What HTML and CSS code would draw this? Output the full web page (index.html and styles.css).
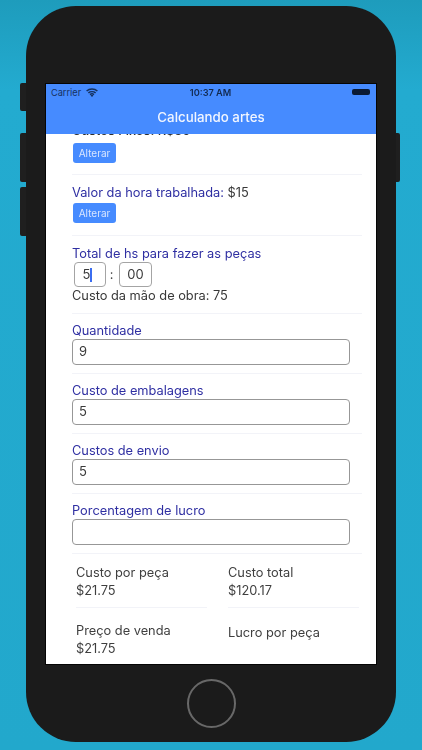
FILE: index.html
```html
<!DOCTYPE html>
<html lang="pt">
<head>
<meta charset="utf-8">
<title>Calculando artes</title>
<link rel="stylesheet" href="styles.css">
</head>
<body>
<div class="phone">
  <span class="side side-mute"></span>
  <span class="side side-up"></span>
  <span class="side side-down"></span>
  <span class="side side-power"></span>
  <main class="screen">
    <header class="appbar">
      <div class="status">
        <div class="status-left">
          <span>Carrier</span>
          <svg class="wifi" viewBox="0 0 12 9" width="12" height="9" fill="none" stroke="#15315f" stroke-width="1.5"><path d="M0.6 3 C3.6 0.2 8.4 0.2 11.4 3"/><path d="M2.4 4.9 C4.4 3.2 7.6 3.2 9.6 4.9"/><path d="M4 6.6 C5.2 5.7 6.8 5.7 8 6.6"/><path d="M6 9 L4.6 7.4 C5.4 6.9 6.6 6.9 7.4 7.4 Z" fill="#15315f" stroke="none"/></svg>
        </div>
        <span class="status-time">10:37 AM</span>
        <div class="status-right"><span class="battery"></span></div>
      </div>
      <h1 class="title">Calculando artes</h1>
    </header>
    <div class="viewport">
      <div class="content">
        <section class="row row-first">
          <p class="label-line dark">Custos Fixos: R$30</p>
          <button class="btn">Alterar</button>
        </section>
        <section class="row row-btn">
          <p class="label-line"><span class="label">Valor da hora trabalhada:</span> <span class="value">$15</span></p>
          <button class="btn">Alterar</button>
        </section>
        <section class="row row-time">
          <p class="label">Total de hs para fazer as peças</p>
          <div class="time">
            <div class="box"><span>5</span><i class="caret"></i></div>
            <span class="colon">:</span>
            <div class="box box-center"><span>00</span></div>
          </div>
          <p class="value">Custo da mão de obra: 75</p>
        </section>
        <section class="row row-field">
          <p class="label">Quantidade</p>
          <div class="field">9</div>
        </section>
        <section class="row row-field">
          <p class="label">Custo de embalagens</p>
          <div class="field">5</div>
        </section>
        <section class="row row-field">
          <p class="label">Custos de envio</p>
          <div class="field">5</div>
        </section>
        <section class="row row-field">
          <p class="label">Porcentagem de lucro</p>
          <div class="field"></div>
        </section>
        <section class="results">
          <div class="cell"><p>Custo por peça</p><p>$21.75</p></div>
          <div class="cell"><p>Custo total</p><p>$120.17</p></div>
          <div class="cell"><p>Preço de venda</p><p>$21.75</p></div>
          <div class="cell cell-single"><p>Lucro por peça</p></div>
        </section>
      </div>
    </div>
  </main>
  <div class="home-area"><span class="home"></span></div>
</div>
</body>
</html>
```
FILE: styles.css
```css
* { box-sizing: border-box; }
html, body { margin: 0; padding: 0; }
body {
  width: 422px;
  height: 750px;
  overflow: hidden;
  background: linear-gradient(180deg, #1e9cbc 0%, #23abd0 12%, #22a8cc 100%);
  font-family: Inter, "Liberation Sans", sans-serif;
  padding: 6px 26px 8px;
}
p, h1 { margin: 0; font-weight: 400; }

.phone {
  position: relative;
  width: 370px;
  height: 736px;
  background: #1b1b1b;
  border-radius: 50px;
  padding: 78px 20px 0;
  display: flex;
  flex-direction: column;
}
.side { position: absolute; background: #1f1f1f; width: 6px; border-radius: 2px 0 0 2px; left: -6px; }
.side-mute { top: 77px; height: 28px; }
.side-up { top: 127px; height: 49px; }
.side-down { top: 181px; height: 49px; }
.side-power { left: auto; right: -4px; width: 4px; top: 127px; height: 49px; border-radius: 0 2px 2px 0; }

.screen {
  width: 330px;
  height: 580px;
  background: #fff;
  display: flex;
  flex-direction: column;
  overflow: hidden;
  flex: none;
  box-shadow: 0 0 0 1px #050505;
  filter: blur(0.45px);
}
.appbar { background: #468bff; height: 50px; flex: none; }
.status {
  height: 16px;
  display: flex;
  align-items: center;
  justify-content: space-between;
  padding: 0 5px;
  font-size: 9.2px;
  color: #15315f;
}
.status-left, .status-right { flex: 1; display: flex; align-items: center; gap: 5px; }
.status-right { justify-content: flex-end; padding-right: 1px; }
.status-time { font-weight: 600; color: #122a50; }
.battery { width: 18px; height: 6px; background: #0b1a33; border-radius: 2px; }
.title {
  color: #f2f6ff;
  font-size: 13.3px;
  font-weight: 500;
  text-align: center;
  line-height: 18px;
  margin-top: 8px;
}

.viewport { flex: 1; overflow: hidden; }
.content { padding: 0 14px 0 26px; margin-top: -12px; font-size: 12.8px; line-height: 17px; color: #3a3a3a; }

.row { border-bottom: 1px solid #f2f3f8; }
.row-first { height: 53px; }
.row-first .btn { margin-top: 4px; }
.row-btn { height: 61px; padding-top: 9px; }
.row-time { height: 78px; padding-top: 9px; }
.row-field { height: 60px; padding-top: 8px; }

.label { color: #2f2fa2; }
.dark { color: #2c2c2c; font-weight: 500; }
.value { color: #383838; }
.label-line { line-height: 17px; }

.btn {
  display: block;
  margin: 2px 0 0 1px;
  width: 43px;
  height: 20px;
  padding: 0;
  border: 0;
  border-radius: 3px;
  background: #468bff;
  color: #d9e6ff;
  font: 400 10px Inter, "Liberation Sans", sans-serif;
}

.time { display: flex; align-items: center; margin: 0 0 0 2px; height: 25px; }
.box {
  width: 32px;
  height: 25px;
  border: 1.5px solid #a4a4a4;
  border-radius: 4px;
  display: flex;
  align-items: center;
  padding-left: 7.5px;
  font-size: 13px;
  color: #3a3a3a;
}
.box-center { justify-content: center; padding-left: 0; width: 33px; }
.caret { width: 1.5px; height: 14px; background: #3b6df0; }
.colon { width: 13px; padding-right: 2px; text-align: center; }
.row-time .value { margin-top: 0; }

.field {
  width: 278px;
  height: 26px;
  border: 1.5px solid #979797;
  border-radius: 4px;
  padding-left: 6px;
  line-height: 23px;
  font-size: 13px;
  color: #3a3a3a;
}

.results {
  display: grid;
  grid-template-columns: 131px 131px;
  column-gap: 21px;
  padding: 10px 0 0 4px;
  color: #3f3f3f;
  line-height: 18px;
}
.cell { height: 44px; border-bottom: 1px solid #f2f3f8; }
.cell:nth-child(n+3) { height: 43px; margin-top: 14px; }
.cell-single { padding-top: 2px; }
.cell-single p { line-height: 18px; }

.home-area { flex: 1; display: flex; align-items: center; justify-content: center; }
.home { width: 49px; height: 49px; border: 2px solid #686868; border-radius: 50%; }
```
